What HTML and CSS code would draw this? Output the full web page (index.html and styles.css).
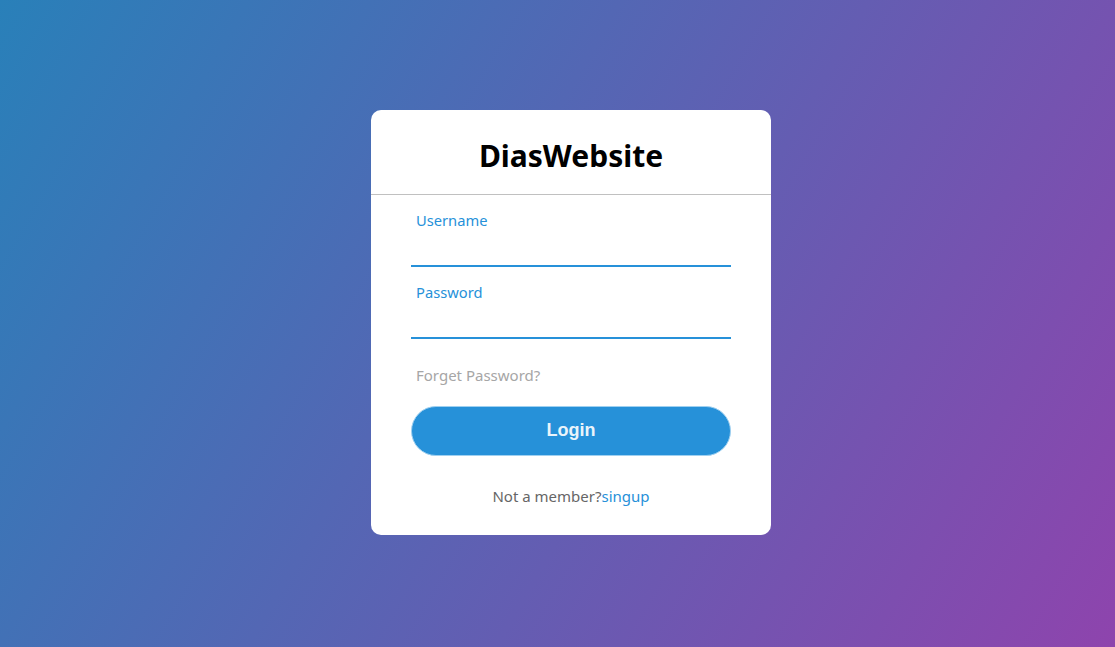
FILE: index.html
```html
<!DOCTYPE html>
<html lang="en">
<head>
<meta charset="utf-8">
<title>DiasWebsite Login</title>
<link rel="stylesheet" href="styles.css">
</head>
<body>
  <div class="card">
    <h1 class="title">DiasWebsite</h1>
    <form class="form">
      <div class="field">
        <input type="text" class="field-input" required>
        <span class="field-line"></span>
        <label class="field-label">Username</label>
      </div>
      <div class="field">
        <input type="password" class="field-input" required>
        <span class="field-line"></span>
        <label class="field-label">Password</label>
      </div>
      <div class="forgot">Forget Password?</div>
      <button type="button" class="login">Login</button>
      <div class="signup">Not a member?<a href="#" class="signup-link">singup</a></div>
    </form>
  </div>
</body>
</html>
```
FILE: styles.css
```css
* { box-sizing: border-box; }
html, body { height: 100%; }
body {
  margin: 0;
  font-family: "Noto Sans", "Open Sans", sans-serif;
  background: linear-gradient(120deg, #2980b9, #8e44ad);
  display: flex;
  align-items: center;
  justify-content: center;
  padding-left: 27px;
  padding-bottom: 3px;
}
.card {
  width: 400px;
  background: #fff;
  border-radius: 10px;
}
.title {
  margin: 0;
  padding: 26px 0 18px;
  line-height: 40px;
  font-size: 30px;
  font-weight: 700;
  text-align: center;
  color: #000;
  border-bottom: 1px solid silver;
}
.form {
  padding: 0 40px;
  display: flow-root;
}
.field {
  position: relative;
  margin: 30px 0;
  border-bottom: 2px solid #adadad;
}
.field-input {
  display: block;
  width: 100%;
  height: 40px;
  padding: 0 5px;
  border: none;
  outline: none;
  background: none;
  font-size: 16px;
}
.field-line {
  position: absolute;
  left: 0;
  right: 0;
  bottom: -2px;
  height: 2px;
  background: #2691d9;
}
.field-label {
  position: absolute;
  left: 5px;
  top: -5px;
  transform: translateY(-50%);
  font-size: 14.7px;
  color: #2691d9;
  pointer-events: none;
}
.forgot {
  margin: -5px 0 20px 5px;
  font-size: 15px;
  line-height: 22px;
  color: #a6a6a6;
}
.login {
  display: block;
  width: 100%;
  height: 50px;
  border: 1px solid #9fd0f0;
  background: #2691d9;
  border-radius: 25px;
  font-family: "Liberation Sans", Arial, sans-serif;
  font-size: 18px;
  font-weight: 700;
  color: #e9f4fb;
}
.signup {
  margin: 29px 0 28px;
  text-align: center;
  font-size: 15px;
  line-height: 22px;
  color: #666;
}
.signup-link {
  color: #2691d9;
  text-decoration: none;
}
```
